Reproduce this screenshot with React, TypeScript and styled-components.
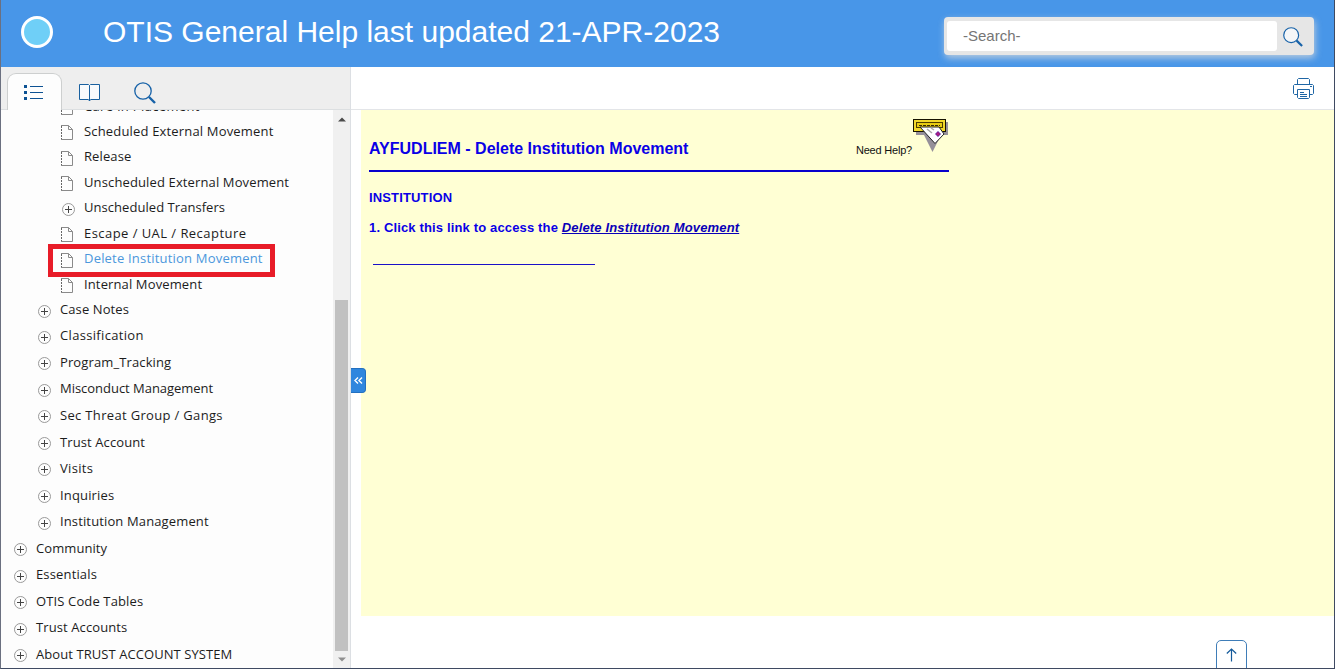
import React from "react";
import styled, { createGlobalStyle } from "styled-components";

const Global = createGlobalStyle`
  * { box-sizing: border-box; }
  body { margin: 0; background: #fff; overflow: hidden; font-family: "Liberation Sans", Arial, sans-serif; }
`;

const Page = styled.div`
  width: 1335px;
  height: 669px;
  display: flex;
  flex-direction: column;
  border: 1px solid #3f4a62;
  border-top: 0;
  border-left-color: #6b7080;
  background: #fff;
  overflow: hidden;
`;

const Header = styled.header`
  height: 67px;
  flex: none;
  display: flex;
  align-items: flex-start;
  background: #4896e8;
  padding: 16px 20px 0 20px;
`;

const Logo = styled.div`
  width: 32px;
  height: 32px;
  border-radius: 50%;
  border: 3px solid #fff;
  background: #6fcff7;
`;

const Title = styled.h1`
  margin: -2px 0 0 50px;
  font-size: 30px;
  line-height: 36px;
  font-weight: 400;
  color: #fff;
  white-space: nowrap;
  flex: 1;
`;

const SearchBox = styled.div`
  width: 370px;
  height: 38px;
  margin-top: 1px;
  display: flex;
  align-items: center;
  padding-left: 3px;
  background: #e6e6e6;
  border-radius: 4px;
  box-shadow: 1px 3px 7px rgba(220, 220, 220, 0.75);
`;

const SearchField = styled.div`
  width: 330px;
  height: 30px;
  padding-left: 16px;
  border-radius: 3px;
  background: #fff;
  color: #757575;
  font-size: 15px;
  line-height: 30px;
`;

const SearchButton = styled.div`
  flex: 1;
  display: flex;
  justify-content: center;
  padding: 1px 5px 0 0;
`;

const Body = styled.div`
  flex: 1;
  min-height: 0;
  display: flex;
`;

const Sidebar = styled.aside`
  width: 350px;
  display: flex;
  flex-direction: column;
  border-right: 1px solid #dcdfe3;
  background: #fdfdfd;
`;

const Tabs = styled.div`
  height: 43px;
  flex: none;
  display: flex;
  align-items: flex-end;
  padding-left: 6px;
  background: #eeeeee;
  box-shadow: inset 0 -1px #dcdfe1;
`;

const Tab = styled.div<{ $active?: boolean }>`
  width: 55px;
  height: 37px;
  display: flex;
  align-items: center;
  justify-content: center;
  padding: 2px ${(p) => (p.$active ? 1 : 0)}px 0 0;
  border: 1px solid ${(p) => (p.$active ? "#cdcfcf" : "transparent")};
  border-bottom: 0;
  border-radius: 9px 9px 0 0;
  background: ${(p) => (p.$active ? "#fdfdfd" : "transparent")};
`;

const TreeArea = styled.div`
  flex: 1;
  min-height: 0;
  display: flex;
`;

const Tree = styled.div`
  flex: 1;
  overflow: hidden;
`;

const TreeRows = styled.div`
  margin-top: -16.4px;
`;

const Row = styled.div<{ $level: number; $height: number }>`
  position: relative;
  height: ${(p) => p.$height}px;
  display: flex;
  align-items: center;
  padding-left: ${(p) => 12 + p.$level * 24}px;
`;

const RowIcon = styled.span`
  width: 23px;
  height: 16px;
  flex: none;
  margin-top: 4.6px;
`;

const RowLabel = styled.span<{ $selected?: boolean; $tracking: number }>`
  font: 13px/20px "Trebuchet MS", "Open Sans", "Noto Sans", sans-serif;
  letter-spacing: ${(p) => p.$tracking}px;
  white-space: nowrap;
  color: ${(p) => (p.$selected ? "#4b97dc" : "#1c1c1c")};
`;

const Highlight = styled.span`
  position: absolute;
  left: 47px;
  top: -1.600px;
  width: 227px;
  height: 33px;
  border: 5px solid #e81c28;
`;

const ScrollTrack = styled.div`
  width: 17px;
  display: flex;
  flex-direction: column;
  align-items: center;
  background: #f0f0f0;
`;

const ScrollArrow = styled.div<{ $down?: boolean }>`
  height: ${(p) => (p.$down ? 17 : 190)}px;
  padding-top: ${(p) => (p.$down ? 6 : 7)}px;
  flex: none;
  line-height: 0;
`;

const ScrollThumb = styled.div`
  width: 13px;
  flex: 1;
  background: #c1c1c1;
`;

const Main = styled.main`
  position: relative;
  flex: 1;
  display: flex;
  flex-direction: column;
`;

const Toolbar = styled.div`
  height: 43px;
  flex: none;
  display: flex;
  justify-content: flex-end;
  padding: 11px 19px 0 0;
  border-bottom: 1px solid #e3e5e8;
`;

const Article = styled.article`
  height: 506px;
  flex: none;
  margin-left: 10px;
  padding: 8px 0 0 8px;
  background: #ffffd4;
  color: #0a00e6;
`;

const ArticleHead = styled.div`
  width: 580px;
  height: 54px;
  display: flex;
  padding-top: 1px;
  border-bottom: 2px solid #0800cc;
`;

const ArticleTitle = styled.h2`
  flex: 1;
  margin: 20px 0 0;
  font-size: 16px;
  line-height: 20px;
`;

const HelpText = styled.span`
  margin: 24px 1px 0 0;
  font-size: 11px;
  line-height: 14px;
  letter-spacing: -0.2px;
  color: #111;
`;

const SectionTitle = styled.h3`
  margin: 18px 0 0;
  font-size: 13px;
  line-height: 16px;
  letter-spacing: 0.15px;
`;

const Step = styled.p`
  margin: 14px 0 0;
  font-size: 13px;
  line-height: 16px;
  font-weight: 700;
  letter-spacing: 0.15px;
`;

const StepLink = styled.a`
  font-style: italic;
  color: #0a00b8;
  text-decoration: underline;
`;

const Divider = styled.div`
  width: 222px;
  height: 1px;
  margin: 28px 0 0 4px;
  background: #1a10c8;
`;

const Footer = styled.div`
  flex: 1;
  min-height: 0;
  overflow: hidden;
  display: flex;
  justify-content: flex-end;
  padding: 24px 87px 0 0;
`;

const TopButton = styled.div`
  width: 31px;
  height: 36px;
  display: flex;
  justify-content: center;
  padding-top: 7px;
  border: 1px solid #3f7db8;
  border-radius: 5px 5px 0 0;
`;

const Collapse = styled.div`
  position: absolute;
  left: 0;
  top: 301px;
  width: 15px;
  height: 25px;
  display: flex;
  align-items: center;
  justify-content: center;
  border: 1px solid #2370c0;
  border-left: 0;
  border-radius: 0 4px 4px 0;
  background: #2f86de;
`;

const PageGlyph = () => (
  <svg width="14" height="16" viewBox="0 0 14 16" fill="none" stroke="#8a8a8a">
    <path d="M.5 1v14" stroke="#666" strokeDasharray="2 1" />
    <path d="M0 .5H7.500L11.500 4.500V14.500H0M7.500 .5V4.500H11.500" />
  </svg>
);

const PlusGlyph = () => (
  <svg width="14" height="16" viewBox="0 0 14 16" fill="none">
    <circle cx="7.500" cy="7.500" r="6" stroke="#9a9a9a" />
    <path d="M4 7.500h7M7.500 4v7" stroke="#444" />
  </svg>
);

const Magnifier = ({ size, lens = "none" }: { size: number; lens?: string }) => (
  <svg width={size} height={size} viewBox="0 0 22 22" fill="none" stroke="#1762a8">
    <circle cx="9" cy="9" r="8.200" strokeWidth="1.300" fill={lens} />
    <path d="M15 15l6 6" strokeWidth="2.400" />
  </svg>
);

const ListGlyph = () => (
  <svg width="20" height="16" viewBox="0 0 20 16">
    <path d="M0 0h3v3H0zM0 6h3v3H0zM0 12h3v3H0z" fill="#0d5293" />
    <path d="M6 1.500h13M6 7.500h13M6 13.500h13" stroke="#0d5293" />
  </svg>
);

const BookGlyph = () => (
  <svg width="22" height="18" viewBox="0 0 22 18" fill="#f8fafc" stroke="#19609f">
    <path d="M.5.5H9.500L10.500 1.500L11.500.5H20.500V15.500H12L10.500 16.500L9 15.500H.5zM10.500 1.500V17" />
  </svg>
);

const PrinterGlyph = () => (
  <svg width="22" height="22" viewBox="0 0 22 22" fill="none" stroke="#1f66a5">
    <path d="M4.500 6V1.500L5.500.5H15.500L16.500 1.500V6M4.500 16.500H1.500L.5 15.500V7.500L1.500 6.500H19.500L20.500 7.500V15.500L19.500 16.500H16.500" />
    <path d="M4.500 11.500H16.500V19.500L15.500 20.500H5.500L4.500 19.500zM7 14.500h4M7 16.500h7M7 18.500h7M17 8.500h2" />
  </svg>
);

const MailSlotGlyph = () => (
  <svg width="36" height="34" viewBox="0 0 36 34">
    <path d="M3 3h32v13H28L19.500 33L11 16H3z" fill="#96909a" />
    <path d="M0 0h33v13H0z" fill="#171300" />
    <path d="M1 1h31v11H1z" fill="#f2d82a" />
    <path d="M3 3h27v6H3z" fill="#4d3d00" />
    <path d="M4 4h25v4H4z" fill="#e8cc10" />
    <path d="M6 6.500h21" stroke="#382a00" strokeDasharray="3 1" />
    <path d="M7 8H26L31 15L22 24.500z" fill="#fff" stroke="#222" />
    <path d="M14 10l5 4M18 9l3 2" stroke="#a9a9a9" strokeWidth="1.500" />
    <path d="M25 12l3 3-3 3-3-3z" fill="#5b22a5" />
    <path d="M25 13v4M23 15h4" stroke="#c51a75" />
  </svg>
);

type Item = { label: string; level: number; tracking: number; page?: boolean; selected?: boolean };

const items: Item[] = [
  { label: "Care in Placement", level: 2, tracking: 0.35, page: true },
  { label: "Scheduled External Movement", level: 2, tracking: 0.17, page: true },
  { label: "Release", level: 2, tracking: 0.1, page: true },
  { label: "Unscheduled External Movement", level: 2, tracking: 0.13, page: true },
  { label: "Unscheduled Transfers", level: 2, tracking: 0.05 },
  { label: "Escape / UAL / Recapture", level: 2, tracking: 0.45, page: true },
  { label: "Delete Institution Movement", level: 2, tracking: 0.2, page: true, selected: true },
  { label: "Internal Movement", level: 2, tracking: 0.13, page: true },
  { label: "Case Notes", level: 1, tracking: 0.1 },
  { label: "Classification", level: 1, tracking: 0.33 },
  { label: "Program_Tracking", level: 1, tracking: 0.12 },
  { label: "Misconduct Management", level: 1, tracking: -0.03 },
  { label: "Sec Threat Group / Gangs", level: 1, tracking: 0.33 },
  { label: "Trust Account", level: 1, tracking: 0.1 },
  { label: "Visits", level: 1, tracking: 0.3 },
  { label: "Inquiries", level: 1, tracking: 0.15 },
  { label: "Institution Management", level: 1, tracking: 0.13 },
  { label: "Community", level: 0, tracking: 0.08 },
  { label: "Essentials", level: 0, tracking: 0.15 },
  { label: "OTIS Code Tables", level: 0, tracking: 0.13 },
  { label: "Trust Accounts", level: 0, tracking: 0.1 },
  { label: "About TRUST ACCOUNT SYSTEM", level: 0, tracking: 0.07 },
];

const rowHeight = (index: number) => (index === 0 ? 24.5 : index > 8 ? 26.55 : 25.5);

export default function App() {
  return (
    <>
      <Global />
      <Page>
        <Header>
          <Logo />
          <Title>OTIS General Help last updated 21-APR-2023</Title>
          <SearchBox>
            <SearchField>-Search-</SearchField>
            <SearchButton><Magnifier size={20} lens="#f4f6f8" /></SearchButton>
          </SearchBox>
        </Header>
        <Body>
          <Sidebar>
            <Tabs>
              <Tab $active><ListGlyph /></Tab>
              <Tab><BookGlyph /></Tab>
              <Tab><Magnifier size={22} /></Tab>
            </Tabs>
            <TreeArea>
              <Tree>
                <TreeRows>
                  {items.map((it, i) => (
                    <Row key={it.label} $level={it.level} $height={rowHeight(i)}>
                      <RowIcon>{it.page ? <PageGlyph /> : <PlusGlyph />}</RowIcon>
                      <RowLabel $selected={it.selected} $tracking={it.tracking}>{it.label}</RowLabel>
                      {it.selected && <Highlight />}
                    </Row>
                  ))}
                </TreeRows>
              </Tree>
              <ScrollTrack>
                <ScrollArrow>
                  <svg width="8" height="5"><path d="M0 4.500L4 .5L8 4.500z" fill="#4a4a4a" /></svg>
                </ScrollArrow>
                <ScrollThumb />
                <ScrollArrow $down>
                  <svg width="8" height="5"><path d="M0 .5H8L4 4.500z" fill="#8f8f8f" /></svg>
                </ScrollArrow>
              </ScrollTrack>
            </TreeArea>
          </Sidebar>
          <Main>
            <Toolbar><PrinterGlyph /></Toolbar>
            <Article>
              <ArticleHead>
                <ArticleTitle>AYFUDLIEM - Delete Institution Movement</ArticleTitle>
                <HelpText>Need Help?</HelpText>
                <MailSlotGlyph />
              </ArticleHead>
              <SectionTitle>INSTITUTION</SectionTitle>
              <Step>
                1. Click this link to access the <StepLink>Delete Institution Movement</StepLink>
              </Step>
              <Divider />
            </Article>
            <Footer>
              <TopButton>
                <svg width="11" height="14" fill="none" stroke="#145a9a" strokeWidth="1.200">
                  <path d="M5.500 13.500V1M.8 5.500L5.500 1L10.200 5.500" />
                </svg>
              </TopButton>
            </Footer>
            <Collapse>
              <svg width="9" height="7" fill="none" stroke="#fff" strokeWidth="1.400">
                <path d="M4 .5L1 3.500L4 6.500M8 .5L5 3.500L8 6.500" />
              </svg>
            </Collapse>
          </Main>
        </Body>
      </Page>
    </>
  );
}
